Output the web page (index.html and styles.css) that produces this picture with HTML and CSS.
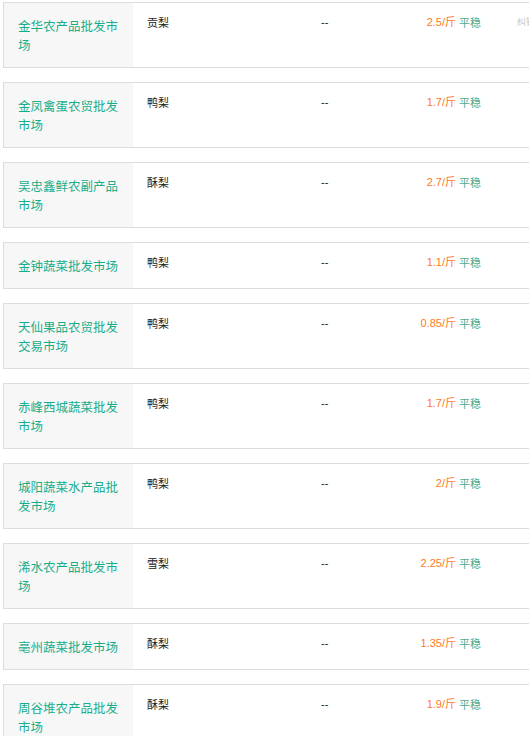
FILE: index.html
```html
<!DOCTYPE html>
<html lang="zh">
<head>
<meta charset="utf-8">
<title>批发市场行情</title>
<link rel="stylesheet" href="styles.css">
</head>
<body>
<div class="list">
  <div class="card">
    <div class="market">金华农产品批发市场</div>
    <div class="info">
      <span class="variety">贡梨</span><span class="dash">--</span><span class="price">2.5/斤</span><span class="trend">平稳</span><span class="extra">纠错</span>
    </div>
  </div>
  <div class="card">
    <div class="market">金凤禽蛋农贸批发市场</div>
    <div class="info">
      <span class="variety">鸭梨</span><span class="dash">--</span><span class="price">1.7/斤</span><span class="trend">平稳</span><span class="extra"></span>
    </div>
  </div>
  <div class="card">
    <div class="market">吴忠鑫鲜农副产品市场</div>
    <div class="info">
      <span class="variety">酥梨</span><span class="dash">--</span><span class="price">2.7/斤</span><span class="trend">平稳</span><span class="extra"></span>
    </div>
  </div>
  <div class="card">
    <div class="market">金钟蔬菜批发市场</div>
    <div class="info">
      <span class="variety">鸭梨</span><span class="dash">--</span><span class="price">1.1/斤</span><span class="trend">平稳</span><span class="extra"></span>
    </div>
  </div>
  <div class="card">
    <div class="market">天仙果品农贸批发交易市场</div>
    <div class="info">
      <span class="variety">鸭梨</span><span class="dash">--</span><span class="price">0.85/斤</span><span class="trend">平稳</span><span class="extra"></span>
    </div>
  </div>
  <div class="card">
    <div class="market">赤峰西城蔬菜批发市场</div>
    <div class="info">
      <span class="variety">鸭梨</span><span class="dash">--</span><span class="price">1.7/斤</span><span class="trend">平稳</span><span class="extra"></span>
    </div>
  </div>
  <div class="card">
    <div class="market">城阳蔬菜水产品批发市场</div>
    <div class="info">
      <span class="variety">鸭梨</span><span class="dash">--</span><span class="price">2/斤</span><span class="trend">平稳</span><span class="extra"></span>
    </div>
  </div>
  <div class="card">
    <div class="market">浠水农产品批发市场</div>
    <div class="info">
      <span class="variety">雪梨</span><span class="dash">--</span><span class="price">2.25/斤</span><span class="trend">平稳</span><span class="extra"></span>
    </div>
  </div>
  <div class="card">
    <div class="market">亳州蔬菜批发市场</div>
    <div class="info">
      <span class="variety">酥梨</span><span class="dash">--</span><span class="price">1.35/斤</span><span class="trend">平稳</span><span class="extra"></span>
    </div>
  </div>
  <div class="card">
    <div class="market">周谷堆农产品批发市场</div>
    <div class="info">
      <span class="variety">酥梨</span><span class="dash">--</span><span class="price">1.9/斤</span><span class="trend">平稳</span><span class="extra"></span>
    </div>
  </div>
</div>
</body>
</html>
```

FILE: styles.css
```css
html, body {
  margin: 0;
  padding: 0;
  background: #ffffff;
  overflow: hidden;
}

body {
  font-family: "Noto Sans CJK SC", "Noto Sans", sans-serif;
}

.list {
  padding: 2px 0 0 3px;
  display: flex;
  flex-direction: column;
  gap: 14px;
  width: 600px;
}

.card {
  display: flex;
  align-items: stretch;
  border: 1px solid #dddddd;
  background: #ffffff;
}

.market {
  box-sizing: border-box;
  width: 129px;
  flex: none;
  padding: 13px 10px 13px 14px;
  background: #f7f7f7;
  color: #17ad8a;
  font-size: 12.5px;
  line-height: 19px;
}

.info {
  display: grid;
  grid-template-columns: 174px 60px 75px 61px auto;
  align-items: start;
  align-content: start;
  padding: 12px 0 0 14px;
  font-size: 11px;
  line-height: 14px;
}

.variety {
  color: #222222;
}

.dash {
  color: #222222;
  font-family: "Liberation Sans", sans-serif;
}

.price {
  color: #ff7a1a;
  text-align: right;
  font-family: "Liberation Sans", "Noto Sans CJK SC", sans-serif;
}

.trend {
  color: #4fa98e;
  padding-left: 3px;
}

.extra {
  color: #c4c4c4;
  font-size: 9px;
}
```
